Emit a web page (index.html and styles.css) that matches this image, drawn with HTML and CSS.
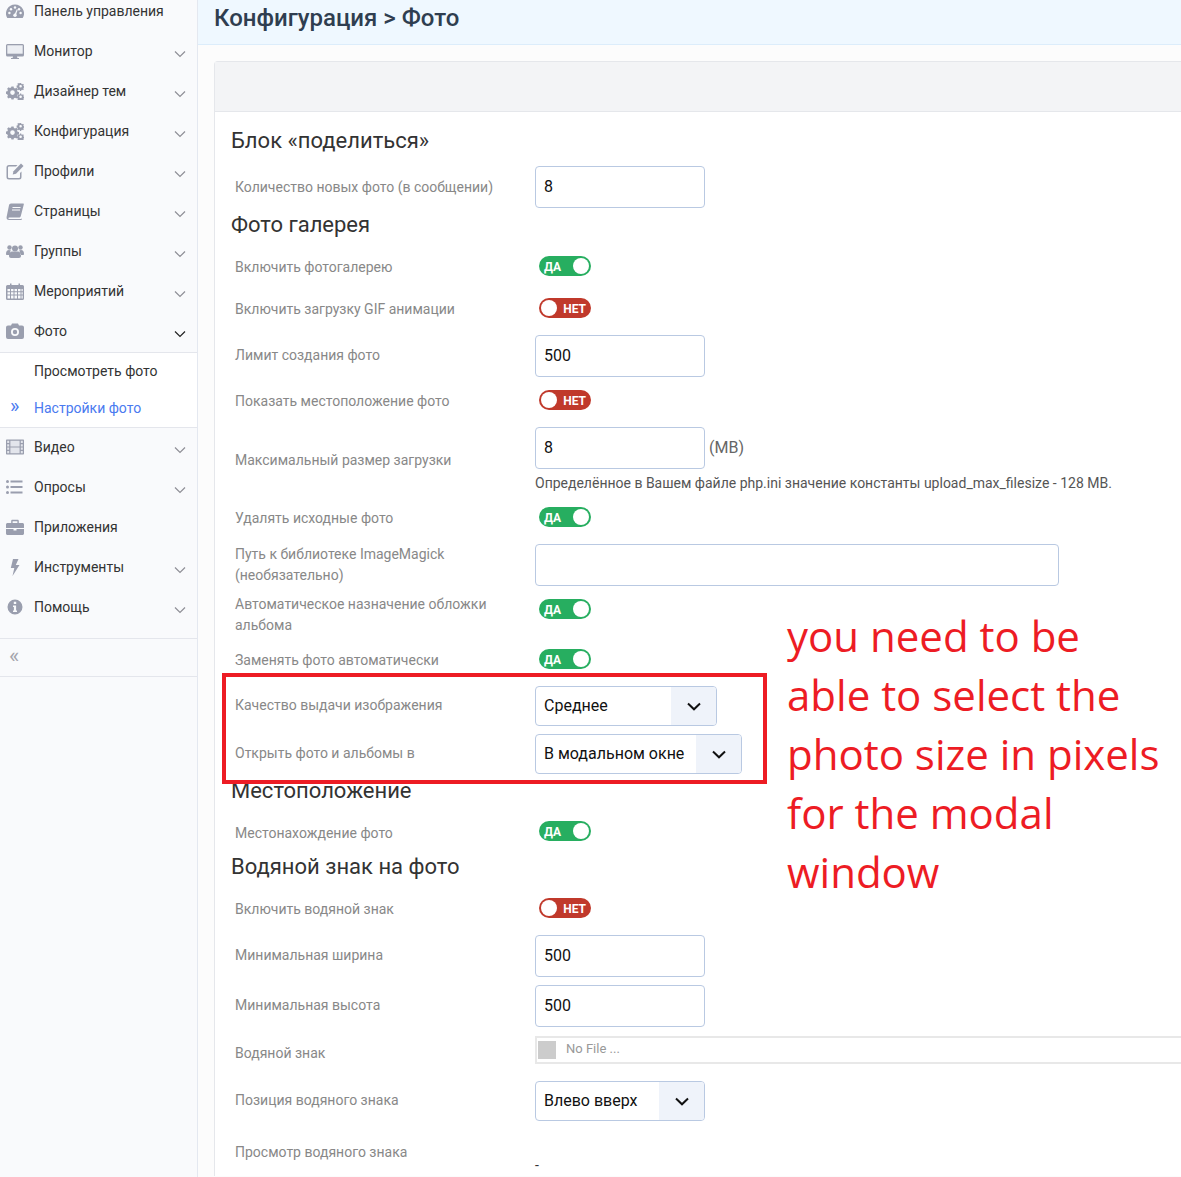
FILE: index.html
```html
<!DOCTYPE html>
<html lang="en">
<head>
  <meta charset="UTF-8">
  <title>Конфигурация > Фото</title>
  <link rel="stylesheet" href="styles.css">
</head>
<body>
  <svg class="sprite" width="0" height="0">
    <symbol id="i-gauge" viewBox="0 0 18 18"><path d="M9 2.500a9 9 0 0 0-7.700 13.600h15.400A9 9 0 0 0 9 2.500z"/><g fill="#f9fafc"><circle cx="9" cy="5.500" r="1.200"/><circle cx="5" cy="7.200" r="1.200"/><circle cx="13" cy="7.200" r="1.200"/><circle cx="3.400" cy="11" r="1.200"/><circle cx="14.600" cy="11" r="1.200"/><circle cx="9" cy="13.300" r="1.700"/><path d="M8.300 13 10.800 7.300l.9.400-1.900 5.800z"/></g></symbol>
    <symbol id="i-desktop" viewBox="0 0 18 18"><path d="M1.500 2h15A1.500 1.500 0 0 1 18 3.500v9.500a1.500 1.500 0 0 1-1.500 1.500H11l.4 1.500h1.600v1H5v-1h1.600l.4-1.500H1.500A1.500 1.500 0 0 1 0 13V3.500A1.500 1.500 0 0 1 1.500 2z"/><path d="M1.300 3.300h15.400v8.400H1.300z" fill="#eceef3"/></symbol>
    <symbol id="i-cogs" viewBox="0 0 18 18"><path fill-rule="evenodd" d="M5.400 4.500h2.200l.3 1.500 1.200.5 1.300-.8 1.500 1.500-.8 1.300.5 1.200 1.400.3v2.200l-1.400.3-.5 1.200.8 1.300-1.500 1.500-1.300-.8-1.200.5-.3 1.300H5.400l-.3-1.300-1.200-.5-1.300.8-1.500-1.500.8-1.300-.5-1.200L0 11.700V9.500l1.400-.3.500-1.200-.8-1.300 1.500-1.500 1.300.8 1.200-.5zM6.500 8.300a2.300 2.300 0 1 0 0 4.600 2.300 2.300 0 0 0 0-4.600z"/><path fill-rule="evenodd" d="M14 1h1.200l.2.900.8.300.8-.4.800.8-.4.800.3.800.9.200v1.200l-.9.200-.3.800.4.800-.8.800-.8-.4-.8.300-.2.900H14l-.2-.9-.8-.3-.8.400-.8-.8.400-.8-.3-.8-.9-.2V3.600l.9-.2.300-.8-.4-.8.8-.8.800.4.800-.3zM14.600 3a1.300 1.300 0 1 0 0 2.600 1.300 1.300 0 0 0 0-2.600zM14 11.500h1.200l.2.900.8.300.8-.4.800.8-.4.800.3.800.9.200v1.200l-.9.200-.3.800.4.800-.8.800-.8-.4-.8.300-.2.900H14l-.2-.9-.8-.3-.8.400-.8-.8.400-.8-.3-.8-.9-.2v-1.200l.9-.2.300-.8-.4-.8.8-.8.800.4.800-.3zM14.600 13.500a1.300 1.300 0 1 0 0 2.600 1.300 1.300 0 0 0 0-2.600z"/></symbol>
    <symbol id="i-edit" viewBox="0 0 18 18"><path d="M3 3h8.500l-1.500 1.500H3A1 1 0 0 0 2 5.500v9.500a1 1 0 0 0 1 1h10a1 1 0 0 0 1-1v-4l1.500-1.500V15A2.500 2.500 0 0 1 13 17.500H3A2.500 2.500 0 0 1 .5 15V5.500A2.500 2.500 0 0 1 3 3z"/><path d="M15 1.500 17.500 4 10 11.800l-3.300.8.800-3.300z"/></symbol>
    <symbol id="i-book" viewBox="0 0 18 18"><path d="M5 1.500h12c.6 0 1 .4.800 1L14.800 14c-.3 1-1 1.500-2 1.500H3.500c-.8 0-1.200.3-1.200.8s.4.700 1.200.7h11.300l1.200-.5-.5 1.500H3C1.300 18 .3 16.800.6 15L3 3.300C3.300 2.200 4 1.500 5 1.500z"/><path d="M6.500 5h8v1h-8zM6 7.500h8v1H6z" fill="#f9fafc"/></symbol>
    <symbol id="i-users" viewBox="0 0 18 18"><circle cx="3.500" cy="5.500" r="2.200"/><circle cx="14.500" cy="5.500" r="2.200"/><circle cx="9" cy="6.500" r="3"/><path d="M0 12c0-2.500 1-4 3-4l2 .5c-1 1-1.500 2.500-1.500 4.500H1c-.6 0-1-.4-1-1zM18 12c0-2.500-1-4-3-4l-2 .5c1 1 1.500 2.500 1.500 4.500H17c.6 0 1-.4 1-1zM6 9.500h6c1.800 0 3 1.500 3 4.500 0 1.300-.8 2-2 2H5c-1.200 0-2-.7-2-2 0-3 1.200-4.500 3-4.500z"/></symbol>
    <symbol id="i-calendar" viewBox="0 0 18 18"><path fill-rule="evenodd" d="M1.500 3H4V1.500h1.500V3h7V1.500H14V3h2.500A1.500 1.500 0 0 1 18 4.500v12a1.500 1.500 0 0 1-1.500 1.500h-15A1.500 1.500 0 0 1 0 16.500v-12A1.500 1.500 0 0 1 1.500 3zM1.500 7v2.200H4V7zM5 7v2.200h2.500V7zM8.500 7v2.200H11V7zM12 7v2.200h2.500V7zM15.500 7v2.200h1.200V7zM1.500 10.200v2.300H4v-2.300zM5 10.200v2.300h2.500v-2.300zM8.500 10.200v2.300H11v-2.300zM12 10.200v2.300h2.500v-2.300zM15.500 10.200v2.300h1.200v-2.300zM1.500 13.500v3H4v-3zM5 13.500v3h2.500v-3zM8.500 13.500v3H11v-3zM12 13.500v3h2.500v-3zM15.500 13.500v3h1.200v-3z"/></symbol>
    <symbol id="i-camera" viewBox="0 0 18 18"><path fill-rule="evenodd" d="M2 3.500h3L6 1.500h6l1 2h3a2 2 0 0 1 2 2V15a2 2 0 0 1-2 2H2a2 2 0 0 1-2-2V5.500a2 2 0 0 1 2-2zM9 6a4 4 0 1 0 0 8 4 4 0 0 0 0-8zM9 7.800a2.200 2.200 0 1 1 0 4.400 2.200 2.200 0 0 1 0-4.400z"/></symbol>
    <symbol id="i-film" viewBox="0 0 18 18"><path d="M1 1.500h16c.6 0 1 .4 1 1v13c0 .6-.4 1-1 1H1c-.6 0-1-.4-1-1v-13c0-.6.4-1 1-1z"/><path fill="#e3e5ec" d="M1.200 2.700V5h2V2.700zM1.200 6.200v2.200h2V6.200zM1.200 9.600v2.200h2V9.600zM1.200 13v2.300h2V13zM14.800 2.700V5h2V2.700zM14.800 6.200v2.200h2V6.200zM14.800 9.600v2.200h2V9.600zM14.800 13v2.300h2V13zM4.400 2.700v5.700h9.200V2.700zM4.400 9.600v5.700h9.200V9.600z"/></symbol>
    <symbol id="i-list" viewBox="0 0 18 18"><circle cx="1.500" cy="3.500" r="1.500"/><circle cx="1.500" cy="9" r="1.500"/><circle cx="1.500" cy="14.500" r="1.500"/><path d="M4.500 2.500H16.500v2H4.500zM4.500 8H16.500v2H4.500zM4.500 13.500H16.500v2H4.500z"/></symbol>
    <symbol id="i-case" viewBox="0 0 18 18"><path d="M6.500 1.800h5c.8 0 1.300.5 1.300 1.300V5h3.700c.8 0 1.500.7 1.500 1.500V10H0V6.500C0 5.700.7 5 1.500 5h3.700V3.100c0-.8.500-1.300 1.300-1.300zM6.600 3.200V5h4.800V3.200zM0 11h7.500v1.500h3V11H18v4.500c0 .8-.7 1.500-1.500 1.500h-15C.7 17 0 16.300 0 15.500z"/></symbol>
    <symbol id="i-bolt" viewBox="0 0 18 18"><path d="M7 1h5.500L9.800 7h3.700L6.500 18l1.800-8H4.800z"/></symbol>
    <symbol id="i-info" viewBox="0 0 18 18"><path fill-rule="evenodd" d="M9 1.500a7.500 7.500 0 1 1 0 15 7.500 7.500 0 0 1 0-15zM7.800 3.800v2.300h2.400V3.800zM7 7.500v1.500h.9v3.500H7V14h4v-1.500h-.9v-5z"/></symbol>
    <symbol id="i-chev" viewBox="0 0 12 8"><path d="M1 1.500 6 6.500l5-5" fill="none" stroke="currentColor" stroke-width="1.200"/></symbol>
    <symbol id="i-chev-b" viewBox="0 0 14 9"><path d="M1 1.500 7 7.300l6-5.800" fill="none" stroke="currentColor" stroke-width="2"/></symbol>
  </svg>

  <div class="layout">
    <aside class="sidebar">
      <ul class="menu">
        <li class="menu-item"><svg class="menu-icon"><use href="#i-gauge"/></svg>Панель управления</li>
        <li class="menu-item"><svg class="menu-icon"><use href="#i-desktop"/></svg>Монитор<svg class="chev"><use href="#i-chev"/></svg></li>
        <li class="menu-item"><svg class="menu-icon"><use href="#i-cogs"/></svg>Дизайнер тем<svg class="chev"><use href="#i-chev"/></svg></li>
        <li class="menu-item"><svg class="menu-icon"><use href="#i-cogs"/></svg>Конфигурация<svg class="chev"><use href="#i-chev"/></svg></li>
        <li class="menu-item"><svg class="menu-icon"><use href="#i-edit"/></svg>Профили<svg class="chev"><use href="#i-chev"/></svg></li>
        <li class="menu-item"><svg class="menu-icon"><use href="#i-book"/></svg>Страницы<svg class="chev"><use href="#i-chev"/></svg></li>
        <li class="menu-item"><svg class="menu-icon"><use href="#i-users"/></svg>Группы<svg class="chev"><use href="#i-chev"/></svg></li>
        <li class="menu-item"><svg class="menu-icon"><use href="#i-calendar"/></svg>Мероприятий<svg class="chev"><use href="#i-chev"/></svg></li>
        <li class="menu-item"><svg class="menu-icon"><use href="#i-camera"/></svg>Фото<svg class="chev open"><use href="#i-chev"/></svg></li>
      </ul>
      <ul class="submenu">
        <li class="submenu-item">Просмотреть фото</li>
        <li class="submenu-item active"><span class="marker">»</span>Настройки фото</li>
      </ul>
      <ul class="menu">
        <li class="menu-item"><svg class="menu-icon"><use href="#i-film"/></svg>Видео<svg class="chev"><use href="#i-chev"/></svg></li>
        <li class="menu-item"><svg class="menu-icon"><use href="#i-list"/></svg>Опросы<svg class="chev"><use href="#i-chev"/></svg></li>
        <li class="menu-item"><svg class="menu-icon"><use href="#i-case"/></svg>Приложения</li>
        <li class="menu-item"><svg class="menu-icon"><use href="#i-bolt"/></svg>Инструменты<svg class="chev"><use href="#i-chev"/></svg></li>
        <li class="menu-item"><svg class="menu-icon"><use href="#i-info"/></svg>Помощь<svg class="chev"><use href="#i-chev"/></svg></li>
      </ul>
      <div class="collapse">«</div>
    </aside>

    <main class="main">
      <div class="page-title"><h1>Конфигурация &gt; Фото</h1></div>
      <section class="panel">
        <div class="panel-head"></div>
        <form class="panel-body">
          <h2>Блок «поделиться»</h2>
          <div class="row row-field">
            <label>Количество новых фото (в сообщении)</label>
            <input class="input" type="text" value="8">
          </div>

          <h2 class="h-low">Фото галерея</h2>
          <div class="row row-toggle">
            <label>Включить фотогалерею</label>
            <span class="toggle on"><b>ДА</b><i></i></span>
          </div>
          <div class="row row-toggle">
            <label>Включить загрузку GIF анимации</label>
            <span class="toggle off"><i></i><b>НЕТ</b></span>
          </div>
          <div class="row row-field">
            <label>Лимит создания фото</label>
            <input class="input" type="text" value="500">
          </div>
          <div class="row row-toggle">
            <label>Показать местоположение фото</label>
            <span class="toggle off"><i></i><b>НЕТ</b></span>
          </div>
          <div class="row row-field row-upload">
            <label>Максимальный размер загрузки</label>
            <div>
              <div class="with-unit"><input class="input" type="text" value="8"><span class="unit">(MB)</span></div>
              <p class="help">Определённое в Вашем файле php.ini значение константы upload_max_filesize - 128 MB.</p>
            </div>
          </div>
          <div class="row row-toggle">
            <label>Удалять исходные фото</label>
            <span class="toggle on"><b>ДА</b><i></i></span>
          </div>
          <div class="row row-field row-path">
            <label>Путь к библиотеке ImageMagick (необязательно)</label>
            <input class="input input-wide" type="text">
          </div>
          <div class="row row-tall">
            <label>Автоматическое назначение обложки альбома</label>
            <span class="toggle on"><b>ДА</b><i></i></span>
          </div>
          <div class="row row-toggle">
            <label>Заменять фото автоматически</label>
            <span class="toggle on"><b>ДА</b><i></i></span>
          </div>
          <div class="row row-field">
            <label>Качество выдачи изображения</label>
            <div class="select select-md"><span>Среднее</span><span class="select-arrow"><svg><use href="#i-chev-b"/></svg></span></div>
          </div>
          <div class="row row-field">
            <label>Открыть фото и альбомы в</label>
            <div class="select select-lg"><span>В модальном окне</span><span class="select-arrow"><svg><use href="#i-chev-b"/></svg></span></div>
          </div>

          <h2>Местоположение</h2>
          <div class="row row-toggle row-low">
            <label>Местонахождение фото</label>
            <span class="toggle on"><b>ДА</b><i></i></span>
          </div>

          <h2 class="h-low">Водяной знак на фото</h2>
          <div class="row row-toggle">
            <label>Включить водяной знак</label>
            <span class="toggle off"><i></i><b>НЕТ</b></span>
          </div>
          <div class="row row-field">
            <label>Минимальная ширина</label>
            <input class="input" type="text" value="500">
          </div>
          <div class="row row-field">
            <label>Минимальная высота</label>
            <input class="input" type="text" value="500">
          </div>
          <div class="row row-file">
            <label>Водяной знак</label>
            <div class="file"><span class="file-thumb"></span><span>No File ...</span></div>
          </div>
          <div class="row row-field">
            <label>Позиция водяного знака</label>
            <div class="select select-sm"><span>Влево вверх</span><span class="select-arrow"><svg><use href="#i-chev-b"/></svg></span></div>
          </div>
          <div class="row row-preview">
            <label>Просмотр водяного знака</label>
            <span class="dash">-</span>
          </div>
        </form>
      </section>
    </main>
  </div>

  <!-- annotation drawn over the screenshot -->
  <div class="note-box"></div>
  <p class="note-text">you need to be able to select the photo size in pixels for the modal window</p>
</body>
</html>
```

FILE: styles.css
```css
* {
  box-sizing: border-box;
}

html, body {
  margin: 0;
  height: 1177px;
  overflow: hidden;
}

body {
  position: relative;
  font-family: Roboto, "Noto Sans", sans-serif;
  font-size: 14px;
  color: #333;
  background-color: #fcfcfc;
}

.sprite {
  position: absolute;
}

.layout {
  display: flex;
  height: 1177px;
  overflow: hidden;
}

/* sidebar */
.sidebar {
  flex: 0 0 198px;
  background-color: #f9fafc;
  border-right: 1px solid #e4e8f0;
}

.sidebar ul {
  list-style: none;
  margin: 0;
  padding: 0;
}

.sidebar > .menu:first-child {
  margin-top: -9px;
}

.menu-item {
  display: flex;
  align-items: center;
  height: 40px;
  padding: 0 11px 0 6px;
  color: #333;
}

.menu-icon {
  flex: none;
  width: 18px;
  height: 18px;
  margin-right: 10px;
  fill: #9a9eae;
}

.chev {
  width: 12px;
  height: 8px;
  margin: 6px 0 0 auto;
  color: #8f8f96;
}

.chev.open {
  color: #222;
}

.sidebar .submenu {
  margin: 1px 0 -1px;
  background-color: #fff;
  border-top: 1px solid #e4e6ec;
  border-bottom: 1px solid #e4e6ec;
}

.submenu-item {
  position: relative;
  display: flex;
  align-items: center;
  height: 36px;
  padding-left: 34px;
}

.submenu-item.active {
  height: 38px;
  color: #4a7af0;
}

.marker {
  position: absolute;
  left: 10px;
  top: 7px;
  line-height: 20px;
  font-size: 20px;
}

.collapse {
  height: 39px;
  margin-top: 11px;
  padding: 3px 0 0 9px;
  font-size: 22px;
  line-height: 28px;
  color: #a5a5ad;
  border-top: 1px solid #e4e6ec;
  border-bottom: 1px solid #e4e6ec;
}

/* main area */
.main {
  flex: 1;
  min-width: 0;
  overflow: hidden;
}

.page-title {
  height: 45px;
  padding-left: 16px;
  background-color: #eff8ff;
  border-bottom: 1px solid #dcedfb;
}

.page-title h1 {
  margin: 0;
  font-size: 24px;
  font-weight: 500;
  line-height: 36px;
  color: #2f3e50;
}

.panel {
  width: 1000px;
  margin: 16px 0 0 16px;
  background-color: #fff;
  border: 1px solid #e5e7eb;
  border-bottom: none;
  border-radius: 4px 4px 0 0;
}

.panel-head {
  height: 50px;
  background-color: #f3f4f6;
  border-bottom: 1px solid #e5e7eb;
}

.panel-body {
  display: flex;
  flex-direction: column;
  padding: 14px 0 0 16px;
}

h2 {
  height: 28px;
  margin: 0 0 6px;
  padding-top: 1px;
  font-size: 22px;
  font-weight: 400;
  line-height: 28px;
  color: #333;
}

h2.h-low {
  margin-bottom: 7px;
}

.row {
  display: grid;
  grid-template-columns: 300px 1fr;
  align-items: center;
  padding-left: 4px;
}

.row label {
  padding-right: 30px;
  line-height: 21px;
  color: #888;
}

.row-field {
  margin: 6px 0 2px;
}

.row-field label {
  padding-bottom: 2px;
}

h2 + .row-field label,
.row-upload label,
.row-path label {
  padding-bottom: 0;
}

.row-path {
  margin: 7px 0 3px;
}

.row-toggle {
  height: 42px;
}

.row-toggle label {
  padding-top: 2px;
}

.row-upload + .row-toggle {
  margin-bottom: -1px;
}

.row-low label {
  padding-top: 4px;
}

.row-tall {
  height: 44px;
  margin-top: 5px;
  align-items: start;
}

.row-file {
  margin: 6px 0 11px;
}

.row-file label {
  padding-top: 8px;
}

.row-preview {
  margin-top: 19px;
  align-items: start;
}

.input {
  width: 170px;
  height: 42px;
  padding: 0 8px 2px;
  font-family: inherit;
  font-size: 16px;
  color: #111;
  background-color: #fff;
  border: 1px solid #b9c9e2;
  border-radius: 4px;
}

.input-wide {
  width: 524px;
}

.with-unit {
  display: flex;
  align-items: center;
}

.unit {
  margin-left: 4px;
  padding-bottom: 2px;
  font-size: 16px;
  color: #666;
}

.help {
  margin: 5px 0 2px;
  line-height: 18px;
  color: #555;
}

/* yes / no switch */
.toggle {
  display: flex;
  align-items: center;
  justify-content: space-between;
  width: 52px;
  height: 20px;
  margin-left: 4px;
  padding: 0 2px;
  border-radius: 10px;
  color: #fff;
  font-size: 12px;
}

.toggle b {
  padding-top: 1px;
  font-weight: 700;
}

.toggle i {
  width: 16px;
  height: 16px;
  background-color: #fff;
  border-radius: 50%;
}

.toggle.on {
  padding-left: 5px;
  background-color: #27ae60;
}

.toggle.off {
  padding-right: 5px;
  background-color: #c0392b;
}

.row-tall .toggle {
  margin-top: 5px;
}

/* select look */
.select {
  display: flex;
  align-items: center;
  justify-content: space-between;
  height: 40px;
  padding-left: 8px;
  font-size: 16px;
  color: #111;
  background-color: #fff;
  border: 1px solid #b9c9e2;
  border-radius: 4px;
  overflow: hidden;
}

.select > span:first-child {
  padding-bottom: 2px;
}

.select-sm {
  width: 170px;
}

.select-md {
  width: 182px;
}

.select-lg {
  width: 207px;
}

.select-arrow {
  display: flex;
  align-items: center;
  justify-content: center;
  width: 45px;
  height: 100%;
  background-color: #eff3fa;
  color: #111;
}

.select-arrow svg {
  width: 14px;
  height: 9px;
}

.file {
  display: flex;
  align-items: center;
  gap: 10px;
  height: 28px;
  padding: 0 0 2px 1px;
  font-size: 13px;
  color: #999;
  background-color: #fff;
  border: 2px solid #e8e8e8;
  border-right: none;
}

.file-thumb {
  width: 18px;
  height: 18px;
  margin-top: 2px;
  background-color: #ccc;
}

.dash {
  padding-top: 13px;
  line-height: 21px;
  color: #333;
}

/* red annotation */
.note-box {
  position: absolute;
  left: 222px;
  top: 673px;
  width: 545px;
  height: 111px;
  border: 4px solid #ed1c24;
}

.note-text {
  position: absolute;
  left: 787px;
  top: 606px;
  width: 380px;
  margin: 0;
  font-family: "Open Sans", sans-serif;
  font-size: 42px;
  line-height: 59px;
  color: #ed1c24;
}
```
